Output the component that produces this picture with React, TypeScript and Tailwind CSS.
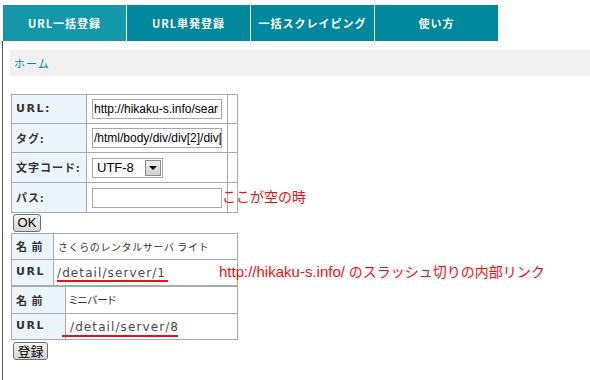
const tabs = ["URL一括登録", "URL単発登録", "一括スクレイピング", "使い方"];

const jp = "font-['Noto_Sans_CJK_JP',sans-serif]";

function Label({ children }: { children: React.ReactNode }) {
  return (
    <div
      className={`flex items-center border-r border-b border-[#aaaaaa] bg-[#edf5fc] pl-[4px] text-[11px] font-bold tracking-[1px] text-[#333] ${jp}`}
    >
      {children}
    </div>
  );
}

function Cell({ children, className = "" }: { children?: React.ReactNode; className?: string }) {
  return (
    <div className={`relative flex items-center border-r border-b border-[#aaaaaa] ${className}`}>
      {children}
    </div>
  );
}

function TextBox({ value }: { value: string }) {
  return (
    <div className="ml-[5px] flex h-[20px] w-[130px] items-center overflow-hidden whitespace-nowrap border border-[#a9a9a9] bg-white pl-[1px] font-['Liberation_Sans',sans-serif] text-[12px] text-black">
      {value}
    </div>
  );
}

function Button({ children, w }: { children: React.ReactNode; w: string }) {
  return (
    <div
      className={`ml-[2px] flex h-[18px] items-center justify-center rounded-[3px] border border-[#707070] bg-gradient-to-b from-[#f6f6f6] to-[#d6d6d6] text-[13px] text-black ${w} ${jp}`}
    >
      {children}
    </div>
  );
}

export default function App() {
  return (
    <div className="h-[380px] w-[590px] overflow-hidden bg-white pt-[5px] font-['Liberation_Sans',sans-serif]">
      {/* Tabs */}
      <nav className="ml-[3px] flex h-[36px] gap-px">
        {tabs.map((t, i) => (
          <div
            key={t}
            className={`flex w-[123px] items-center justify-center text-[11px] font-bold tracking-[1px] text-white ${jp} ${
              i === 0 ? "bg-[#1597aa]" : "bg-[#00889e]"
            }`}
          >
            {t}
          </div>
        ))}
      </nav>

      <main className="ml-[2px] h-[339px] border-l border-[#555] pt-[9px]">
        {/* Breadcrumb */}
        <div className="ml-[7px] flex h-[26px] items-center bg-[#f0f0f0] pl-[4px]">
          <span className={`text-[11px] tracking-[1px] text-[#00899e] ${jp}`}>ホーム</span>
        </div>

        <div className="relative ml-[8px] mt-[18px]">
          {/* Form table */}
          <div className="grid w-max grid-cols-[75px_141px_10px] grid-rows-[29px_29px_30px_30px] border-t border-l border-[#aaaaaa]">
            <Label>
              <span className="font-['DejaVu_Sans',sans-serif] tracking-[1.5px]">URL:</span>
            </Label>
            <Cell>
              <TextBox value="http://hikaku-s.info/sear" />
            </Cell>
            <Cell />

            <Label>タグ:</Label>
            <Cell>
              <TextBox value="/html/body/div/div[2]/div[" />
            </Cell>
            <Cell />

            <Label>文字コード:</Label>
            <Cell>
              <div className="relative ml-[5px] flex h-[20px] w-[71px] items-center border border-[#a9a9a9] bg-white pl-[4px] text-[13px] text-black">
                UTF-8
                <div className="absolute right-[1px] top-[1px] flex h-[16px] w-[16px] items-center justify-center border border-[#8a8a8a] bg-gradient-to-b from-[#f0f0f0] to-[#cfcfcf]">
                  <div className="h-0 w-0 border-x-[4px] border-t-[4px] border-x-transparent border-t-black" />
                </div>
              </div>
            </Cell>
            <Cell />

            <Label>パス:</Label>
            <Cell className="overflow-visible">
              <div className="relative">
                <TextBox value="" />
                <span
                  className={`absolute left-full top-[-2px] whitespace-nowrap text-[14px] leading-[20px] text-[#f01010] ${jp}`}
                >
                  ここが空の時
                </span>
              </div>
            </Cell>
            <Cell />
          </div>

          <div className="mt-[1px]">
            <Button w="w-[28px]">
              <span className="font-['Liberation_Sans',sans-serif]">OK</span>
            </Button>
          </div>

          {/* Result 1 */}
          <div className="mt-[1px] grid w-max grid-cols-[42px_184px] grid-rows-[26px_26px] border-t border-l border-[#aaaaaa]">
            <Label>名 前</Label>
            <Cell>
              <span className={`pl-[4px] text-[10px] tracking-[0.6px] text-[#333] ${jp}`}>
                さくらのレンタルサーバ ライト
              </span>
            </Cell>
            <Label>
              <span className="font-['DejaVu_Sans',sans-serif] tracking-[1.5px]">URL</span>
            </Label>
            <Cell>
              <span className="pl-[3px] font-['DejaVu_Sans',sans-serif] text-[12px] tracking-[1.1px] text-[#4a4a4a]">
                /detail/server/1
              </span>
              <div className="absolute left-[3px] top-[20px] h-[2px] w-[111px] bg-[#e8101a]" />
            </Cell>
          </div>

          {/* Result 2 */}
          <div className="grid w-max grid-cols-[54px_172px] grid-rows-[27px_26px] border-t border-l border-[#aaaaaa]">
            <Label>名 前</Label>
            <Cell>
              <span className={`pl-[3px] text-[10.5px] text-[#333] [font-feature-settings:'palt'] ${jp}`}>
                ミニバード
              </span>
            </Cell>
            <Label>
              <span className="font-['DejaVu_Sans',sans-serif] tracking-[1.5px]">URL</span>
            </Label>
            <Cell>
              <span className="pl-[4px] font-['DejaVu_Sans',sans-serif] text-[12px] tracking-[1.1px] text-[#4a4a4a]">
                /detail/server/8
              </span>
              <div className="absolute left-[-4px] top-[21px] h-[2px] w-[116px] bg-[#e8101a]" />
            </Cell>
          </div>

          <div className="mt-[2px]">
            <Button w="w-[35px]">登録</Button>
          </div>

          {/* Annotation */}
          <div
            className="absolute left-[208px] top-[167px] whitespace-nowrap text-[14px] leading-[20px] text-[#f01010]"
          >
            <span className="font-['Liberation_Sans',sans-serif] text-[15px]">http://hikaku-s.info/</span>{" "}
            <span className={jp}>のスラッシュ切りの内部リンク</span>
          </div>
        </div>
      </main>
    </div>
  );
}
